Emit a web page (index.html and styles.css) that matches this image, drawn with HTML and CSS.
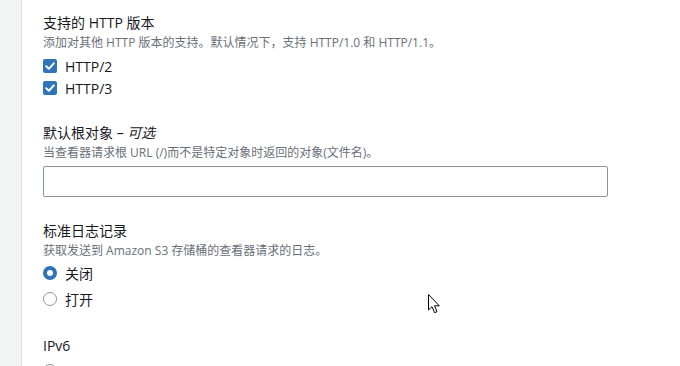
FILE: index.html
```html
<!DOCTYPE html>
<html lang="zh">
<head>
<meta charset="utf-8">
<link rel="stylesheet" href="styles.css">
</head>
<body>
<div class="page">
  <div class="sidebar"></div>
  <main class="content">
    <section class="field">
      <div class="label">支持的 HTTP 版本</div>
      <div class="desc">添加对其他 HTTP 版本的支持。默认情况下，支持 HTTP/1.0 和 HTTP/1.1。</div>
      <div class="options checks">
        <label class="opt"><span class="cb"><svg viewBox="0 0 14 14" width="14" height="14"><path d="M3.2 7.2 L5.9 9.8 L10.8 4.4" fill="none" stroke="#fff" stroke-width="2" stroke-linecap="round" stroke-linejoin="round"/></svg></span><span class="opt-text">HTTP/2</span></label>
        <label class="opt"><span class="cb"><svg viewBox="0 0 14 14" width="14" height="14"><path d="M3.2 7.2 L5.9 9.8 L10.8 4.4" fill="none" stroke="#fff" stroke-width="2" stroke-linecap="round" stroke-linejoin="round"/></svg></span><span class="opt-text">HTTP/3</span></label>
      </div>
    </section>
    <section class="field">
      <div class="label">默认根对象 – <i>可选</i></div>
      <div class="desc">当查看器请求根 URL (/)而不是特定对象时返回的对象(文件名)。</div>
      <div class="input"></div>
    </section>
    <section class="field">
      <div class="label">标准日志记录</div>
      <div class="desc">获取发送到 Amazon S3 存储桶的查看器请求的日志。</div>
      <div class="options radios">
        <label class="opt"><span class="rb on"></span><span class="opt-text">关闭</span></label>
        <label class="opt"><span class="rb"></span><span class="opt-text">打开</span></label>
      </div>
    </section>
    <section class="field">
      <div class="label">IPv6</div>
      <div class="options radios last">
        <span class="opt"><span class="rb"></span></span>
      </div>
    </section>
  </main>
</div>
<svg class="cursor" width="13" height="21" viewBox="0 0 13 21"><path d="M0.5 0.5 L0.5 16 L4 12.7 L6.6 18.7 L9 17.7 L6.5 11.8 L11.3 11.8 Z" fill="#fff" stroke="#000" stroke-width="1" stroke-linejoin="miter"/></svg>
</body>
</html>
```
FILE: styles.css
```css
html, body {
  margin: 0;
  padding: 0;
  background: #fff;
  height: 366px;
  overflow: hidden;
}
body {
  font-family: "Open Sans", "Noto Sans CJK SC", sans-serif;
  color: #16191f;
}
.page {
  display: flex;
  height: 366px;
}
.sidebar {
  width: 21px;
  flex: none;
  background: #f2f3f3;
  border-right: 1px solid #e1e4e4;
}
.content {
  padding: 13px 0 0 21px;
  display: flex;
  flex-direction: column;
  gap: 24px;
}
.field {
  display: flex;
  flex-direction: column;
}
.label {
  font-size: 14px;
  line-height: 20px;
  color: #16191f;
}
.label i {
  font-style: italic;
}
.desc {
  font-size: 12px;
  line-height: 16px;
  color: #687078;
  margin-top: 2px;
}
.options {
  display: flex;
  flex-direction: column;
}
.checks {
  margin-top: 4px;
}
.radios {
  margin-top: 1px;
}
.radios.last {
  margin-top: 2px;
}
.opt {
  display: flex;
  align-items: center;
  gap: 8px;
  font-size: 14px;
  color: #16191f;
}
.checks .opt { height: 22px; }
.radios .opt { height: 26px; }
.cb {
  width: 14px;
  height: 14px;
  border-radius: 2px;
  background: #2f73b8;
  display: block;
}
.cb svg { display: block; }
.rb {
  width: 14px;
  height: 14px;
  box-sizing: border-box;
  border-radius: 50%;
  border: 1.5px solid #8d979e;
  background: #fff;
  display: block;
}
.rb.on {
  border: 4px solid #2f73b8;
}
.input {
  margin-top: 5px;
  width: 565px;
  height: 31px;
  box-sizing: border-box;
  border: 1px solid #879596;
  border-radius: 2px;
  background: #fff;
}
.cursor {
  position: absolute;
  left: 428px;
  top: 294px;
}
```
